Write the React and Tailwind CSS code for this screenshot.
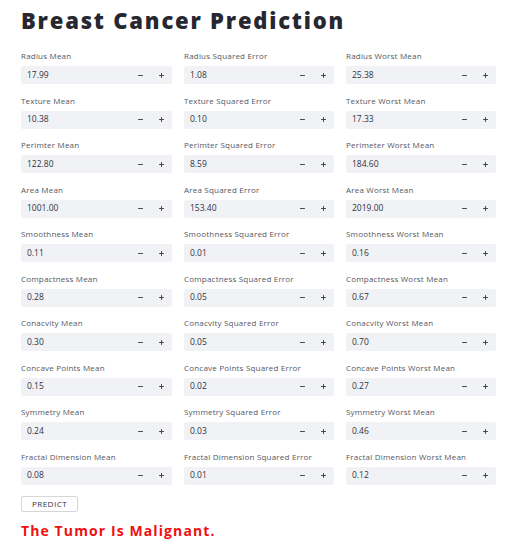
import { Minus, Plus } from 'lucide-react';

const fields = [
    ['Radius Mean', '17.99', 'Radius Squared Error', '1.08', 'Radius Worst Mean', '25.38'],
    ['Texture Mean', '10.38', 'Texture Squared Error', '0.10', 'Texture Worst Mean', '17.33'],
    ['Perimter Mean', '122.80', 'Perimter Squared Error', '8.59', 'Perimeter Worst Mean', '184.60'],
    ['Area Mean', '1001.00', 'Area Squared Error', '153.40', 'Area Worst Mean', '2019.00'],
    ['Smoothness Mean', '0.11', 'Smoothness Squared Error', '0.01', 'Smoothness Worst Mean', '0.16'],
    ['Compactness Mean', '0.28', 'Compactness Squared Error', '0.05', 'Compactness Worst Mean', '0.67'],
    ['Conacvity Mean', '0.30', 'Conacvity Squared Error', '0.05', 'Conacvity Worst Mean', '0.70'],
    ['Concave Points Mean', '0.15', 'Concave Points Squared Error', '0.02', 'Concave Points Worst Mean', '0.27'],
    ['Symmetry Mean', '0.24', 'Symmetry Squared Error', '0.03', 'Symmetry Worst Mean', '0.46'],
    ['Fractal Dimension Mean', '0.08', 'Fractal Dimension Squared Error', '0.01', 'Fractal Dimension Worst Mean', '0.12'],
];

function NumberInput({ label, value }) {
    return (
        <div className="flex flex-col">
            <div className="text-[8px] leading-[11px] text-[#555762] mb-[5px] tracking-[0.2px]">{label}</div>
            <div className="h-[18px] bg-[#f0f2f6] rounded-[2px] flex items-center pl-[6px] text-[8.5px] text-[#31333f]">
                <span className="flex-1">{value}</span>
                <span className="w-[21px] flex justify-center"><Minus size={7} strokeWidth={3} /></span>
                <span className="w-[21px] flex justify-center"><Plus size={7} strokeWidth={3} /></span>
            </div>
        </div>
    );
}

export default function App() {
    return (
        <div className="min-h-screen bg-white pl-[21px] pt-[5px] text-[#31333f]" style={{ fontFamily: '"Open Sans", sans-serif' }}>
            <h1 className="text-[22px] leading-[30px] font-extrabold tracking-[1.8px] text-[#262730]">
                Breast Cancer Prediction
            </h1>
            <div className="grid grid-cols-[151px_150px_150px] gap-x-[12px] gap-y-[10.5px] mt-[15px]">
                {fields.map((row) =>
                    [0, 2, 4].map((i) => (
                        <NumberInput key={row[i]} label={row[i]} value={row[i + 1]} />
                    ))
                )}
            </div>
            <button className="mt-[11px] h-[16px] w-[57px] border border-[#d6d6d9] rounded-[2px] bg-white text-[8px] tracking-[0.5px] text-[#31333f] flex items-center justify-center">
                PREDICT
            </button>
            <div className="mt-[10px] text-[14px] leading-[18px] font-bold text-[#ee1111] tracking-[1.1px]">
                The Tumor Is Malignant.
            </div>
        </div>
    );
}
